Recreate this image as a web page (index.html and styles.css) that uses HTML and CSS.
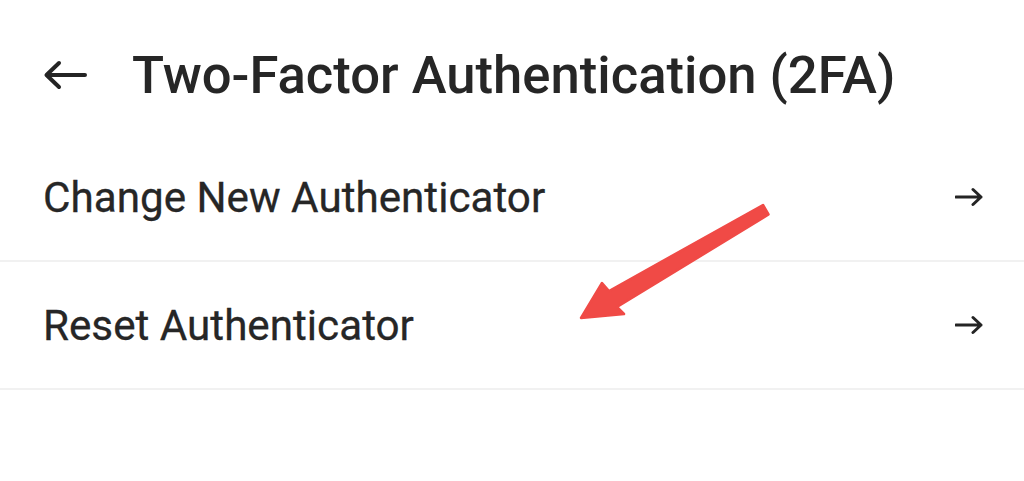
FILE: index.html
```html
<!DOCTYPE html>
<html>
<head>
<meta charset="utf-8">
<link rel="stylesheet" href="styles.css">
</head>
<body>
<div class="page">
  <header class="header">
    <svg class="back" width="44" height="30" viewBox="0 0 44 30">
      <path d="M42 15H4M16 3L3.5 15L16 27" fill="none" stroke="#242424" stroke-width="4" stroke-linecap="round" stroke-linejoin="round"/>
    </svg>
    <h1 class="title">Two-Factor Authentication (2FA)</h1>
  </header>
  <div class="row">
    <span class="label">Change New Authenticator</span>
    <svg class="go" width="28" height="20" viewBox="0 0 28 20"><path d="M1 10H26M18 2.5L26 10L18 17.5" fill="none" stroke="#242424" stroke-width="3" stroke-linecap="round" stroke-linejoin="round"/></svg>
  </div>
  <div class="row">
    <span class="label">Reset Authenticator</span>
    <svg class="go" width="28" height="20" viewBox="0 0 28 20"><path d="M1 10H26M18 2.5L26 10L18 17.5" fill="none" stroke="#242424" stroke-width="3" stroke-linecap="round" stroke-linejoin="round"/></svg>
  </div>
  <svg class="annot" width="1024" height="481" viewBox="0 0 1024 481">
    <polygon points="581,318 602,283 609,291 763,205 768.5,214.5 617,307 624,314" fill="#f04a46" stroke="#f04a46" stroke-width="2.5" stroke-linejoin="round"/>
  </svg>
</div>
</body>
</html>
```
FILE: styles.css
```css
html, body {
  margin: 0;
  padding: 0;
  background: #ffffff;
}
.page {
  position: relative;
  width: 1024px;
  height: 481px;
  overflow: hidden;
  font-family: Roboto, "Liberation Sans", sans-serif;
  color: #262626;
}
.header {
  display: flex;
  align-items: center;
  height: 118px;
  padding-top: 16px;
  padding-left: 43px;
  gap: 45px;
}
.back {
  display: block;
  flex: none;
}
.title {
  margin: 0;
  font-size: 52.6px;
  font-weight: 500;
  letter-spacing: 0;
  color: #262626;
}
.row {
  display: flex;
  align-items: center;
  justify-content: space-between;
  height: 126px;
  padding: 0 41px 0 43px;
  border-bottom: 2px solid #f1f1f1;
}
.label {
  font-size: 42.2px;
  font-weight: 400;
  -webkit-text-stroke: 0.3px #262626;
}
.go {
  display: block;
  flex: none;
}
.annot {
  position: absolute;
  left: 0;
  top: 0;
  pointer-events: none;
}
```
